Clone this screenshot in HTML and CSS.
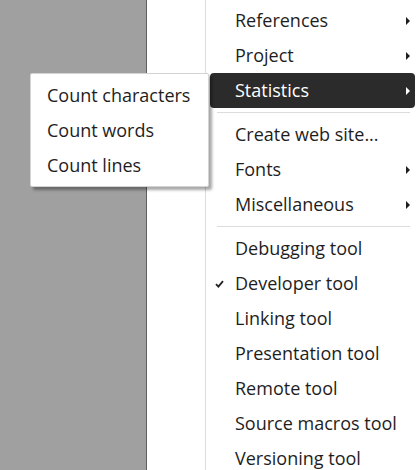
FILE: index.html
```html
<!DOCTYPE html>
<html>
<head>
<meta charset="utf-8">
<link rel="stylesheet" href="styles.css">
</head>
<body>
<div class="screen">
  <div class="side"></div>
  <div class="gap"></div>
  <div class="menu">
    <div class="item sub"><span>References</span><i class="arrow"></i></div>
    <div class="item sub"><span>Project</span><i class="arrow"></i></div>
    <div class="item sub active"><span>Statistics</span><i class="arrow"></i></div>
    <div class="sep"></div>
    <div class="item"><span>Create web site...</span></div>
    <div class="item sub"><span>Fonts</span><i class="arrow"></i></div>
    <div class="item sub"><span>Miscellaneous</span><i class="arrow"></i></div>
    <div class="sep"></div>
    <div class="item"><span>Debugging tool</span></div>
    <div class="item checked"><svg class="check" width="9" height="8" viewBox="0 0 9 8"><path d="M1 4.2 L3.4 6.6 L8 1.2" fill="none" stroke="#222" stroke-width="1.8"/></svg><span>Developer tool</span></div>
    <div class="item"><span>Linking tool</span></div>
    <div class="item"><span>Presentation tool</span></div>
    <div class="item"><span>Remote tool</span></div>
    <div class="item"><span>Source macros tool</span></div>
    <div class="item"><span>Versioning tool</span></div>
  </div>
  <div class="submenu">
    <div class="subitem">Count characters</div>
    <div class="subitem">Count words</div>
    <div class="subitem">Count lines</div>
  </div>
</div>
</body>
</html>
```
FILE: styles.css
```css
html, body {
  margin: 0;
  padding: 0;
  background: #ffffff;
}
body {
  font-family: "Open Sans", "Noto Sans", sans-serif;
  font-size: 18px;
  color: #1e1e1e;
}
.screen {
  position: relative;
  display: flex;
  width: 416px;
  height: 470px;
  overflow: hidden;
}
.side {
  width: 146px;
  background: #a0a0a0;
  border-right: 1px solid #5e5e5e;
  flex: none;
}
.gap {
  width: 58px;
  flex: none;
}
.menu {
  flex: 1;
  border-left: 1px solid #dcdcdc;
  padding-top: 3px;
  display: flex;
  flex-direction: column;
}
.item {
  position: relative;
  flex: none;
  box-sizing: border-box;
  height: 35px;
  margin: 0 1px 0 4px;
  padding: 0 5px 2px 25px;
  display: flex;
  align-items: center;
  border-radius: 4px;
}
.item span {
  flex: 1;
  white-space: nowrap;
}
.item.active {
  background: #2b2b2b;
  color: #ffffff;
}
.arrow {
  width: 0;
  height: 0;
  margin-top: 2px;
  border-top: 4px solid transparent;
  border-bottom: 4px solid transparent;
  border-left: 4px solid #1e1e1e;
}
.active .arrow {
  border-left-color: #ffffff;
}
.check {
  position: absolute;
  left: 5px;
  top: 14px;
}
.sep {
  flex: none;
  height: 1px;
  background: #dcdcdc;
  margin: 4px 6px 4px 11px;
}
.submenu {
  position: absolute;
  left: 30px;
  top: 73px;
  width: 177px;
  padding: 4px 0 3px;
  background: #ffffff;
  border: 1px solid #d4d4d4;
  border-radius: 2px;
  box-shadow: 3px 3px 3px rgba(0, 0, 0, 0.35);
}
.subitem {
  box-sizing: border-box;
  height: 35px;
  display: flex;
  align-items: center;
  padding: 0 0 1px 16px;
  white-space: nowrap;
}
```
